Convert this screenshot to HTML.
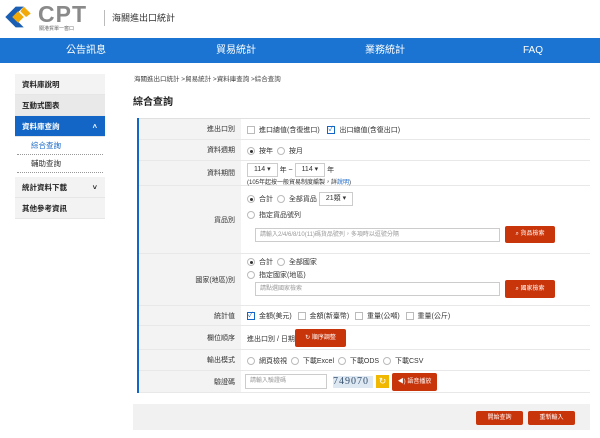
<!DOCTYPE html>
<html><head><meta charset="utf-8"><style>
*{margin:0;padding:0;box-sizing:border-box}
body{width:600px;height:438px;background:#fff;font-family:"Liberation Sans","Noto Sans CJK TC",sans-serif;font-size:7px;color:#333;position:relative;overflow:hidden}
.a{position:absolute}
.nav{top:38px;left:0;width:600px;height:25px;background:#1b74d1;color:#fff;font-size:10px}
.nav span{position:absolute;top:0;line-height:25px;height:25px}
.side{left:15px;top:74px;width:90px}
.si{height:21px;line-height:21px;padding-left:7px;font-size:7.5px;font-weight:bold;color:#222;background:#f3f3f3;border-bottom:1px solid #e6e6e6}
.sub{height:18px;line-height:18px;padding-left:14px;font-size:7.5px;background:#fff;border-bottom:1px dotted #999;margin:0 2px}
.row{position:absolute;left:137px;width:453px;border-bottom:1px solid #e8e8e8}
.lab{position:absolute;left:0;top:0;bottom:0;width:104px;background:#f3f3f3;text-align:right;padding-right:6px;display:flex;align-items:center;justify-content:flex-end}
.c{position:absolute;left:110px}
.cb{display:inline-block;width:8px;height:8px;border:1px solid #bbb;vertical-align:middle;margin-right:4px;background:#fff}
.rd{display:inline-block;width:8px;height:8px;border:1px solid #bbb;border-radius:50%;vertical-align:middle;margin-right:4px;background:#fff;position:relative}
.rd.on::after{content:"";position:absolute;left:2px;top:2px;width:3px;height:3px;border-radius:50%;background:#333}
.btn{position:absolute;background:#c9350b;color:#fff;font-size:6px;text-align:center;border-radius:2px}
.inp{position:absolute;border:1px solid #ccc;background:#fff;color:#999;font-size:6px;padding-left:4px}
.sel{display:inline-block;border:1px solid #ccc;height:14px;line-height:12px;padding:0 6px;vertical-align:middle}
</style></head><body>
<div class="a" style="left:3px;top:4px;width:30px;height:26px">
<svg width="30" height="26" viewBox="0 0 26 22"><path d="M2 11 L11 2 L18 2 L9 11 L18 20 L11 20Z" fill="#1a5fb4"/><path d="M13 6 L18 11 L13 16 L8 11Z" fill="#f2a90a"/><path d="M18 2 L24 8 L20 11 L15 6Z" fill="#f2a90a"/></svg></div>
<div class="a" style="left:38px;top:1px;font-size:23px;font-weight:bold;color:#8a8a8a;letter-spacing:1px">CPT</div>
<div class="a" style="left:39px;top:25px;font-size:5px;color:#666">關港貿單一窗口</div>
<div class="a" style="left:104px;top:10px;width:1px;height:16px;background:#bbb"></div>
<div class="a" style="left:112px;top:11px;font-size:9px;color:#333">海關進出口統計</div>
<div class="a nav"><span style="left:66px">公告訊息</span><span style="left:216px">貿易統計</span><span style="left:365px">業務統計</span><span style="left:523px">FAQ</span></div>
<div class="a side">
<div class="si">資料庫說明</div><div class="si" style="background:#e9e9e9">互動式圖表</div>
<div class="si" style="background:#1466c6;color:#fff">資料庫查詢<span style="float:right;margin-right:8px">˄</span></div>
<div class="sub" style="color:#1466c6">綜合查詢</div><div class="sub">輔助查詢</div>
<div class="si" style="margin-top:4px">統計資料下載<span style="float:right;margin-right:8px">˅</span></div><div class="si">其他參考資訊</div>
</div>
<div class="a" style="left:134px;top:73px;font-size:6.5px;color:#444">海關進出口統計 &gt;貿易統計 &gt;資料庫查詢 &gt;綜合查詢</div>
<div class="a" style="left:133px;top:93px;font-size:10px;font-weight:bold;color:#222">綜合查詢</div>
<div class="a" style="left:137px;top:118px;width:2px;height:275px;background:#1466c6;z-index:2"></div>
<div class="a" style="left:137px;top:118px;width:453px;height:1px;background:#e0e0e0"></div>
<div class="row" style="top:119px;height:21px"><div class="lab">進出口別</div><div class="c" style="top:6px"><span class="cb"></span>進口總值(含復進口) &nbsp;&nbsp;&nbsp;<span class="cb" style="border-color:#1466c6;color:#1466c6;font-size:7px;line-height:6px">✓</span>出口總值(含復出口)</div></div>
<div class="row" style="top:140px;height:21px"><div class="lab">資料週期</div><div class="c" style="top:6px"><span class="rd on"></span>按年 &nbsp;<span class="rd"></span>按月</div></div>
<div class="row" style="top:161px;height:25px"><div class="lab">資料期間</div><div class="c" style="top:2px"><span class="sel">114 ▾</span> 年 ~ <span class="sel">114 ▾</span> 年<br><span style="font-size:6px">(105年起按一般貿易制度編製，詳<span style="color:#1466c6">說明</span>)</span></div></div>
<div class="row" style="top:186px;height:68px"><div class="lab">貨品別</div><div class="c" style="top:6px"><span class="rd on"></span>合計 &nbsp;<span class="rd"></span>全部貨品 <span class="sel">21類 ▾</span><br><div style="margin-top:4px"><span class="rd"></span>指定貨品號列</div></div>
<div class="inp" style="left:118px;top:42px;width:245px;height:14px;line-height:12px">請輸入2/4/6/8/10(11)碼貨品號列，多項時以逗號分隔</div>
<div class="btn" style="left:368px;top:40px;width:50px;height:17px;line-height:17px">⌕ 貨品檢索</div></div>
<div class="row" style="top:254px;height:52px"><div class="lab">國家(地區)別</div><div class="c" style="top:3px"><span class="rd on"></span>合計 &nbsp;<span class="rd"></span>全部國家<br><div style="margin-top:3px"><span class="rd"></span>指定國家(地區)</div></div>
<div class="inp" style="left:118px;top:28px;width:245px;height:14px;line-height:12px">請點選國家檢索</div>
<div class="btn" style="left:368px;top:26px;width:50px;height:18px;line-height:18px">⌕ 國家檢索</div></div>
<div class="row" style="top:306px;height:20px"><div class="lab">統計值</div><div class="c" style="top:5px"><span class="cb" style="border-color:#1466c6;color:#1466c6;line-height:6px">✓</span>金額(美元) &nbsp;&nbsp;<span class="cb"></span>金額(新臺幣) &nbsp;&nbsp;<span class="cb"></span>重量(公噸) &nbsp;&nbsp;<span class="cb"></span>重量(公斤)</div></div>
<div class="row" style="top:326px;height:24px"><div class="lab">欄位順序</div><div class="c" style="top:8px">進出口別 / 日期</div><div class="btn" style="left:158px;top:3px;width:51px;height:18px;line-height:18px">↻ 順序調整</div></div>
<div class="row" style="top:350px;height:21px"><div class="lab">輸出模式</div><div class="c" style="top:6px"><span class="rd"></span>網頁檢視 &nbsp;<span class="rd"></span>下載Excel &nbsp;<span class="rd"></span>下載ODS &nbsp;<span class="rd"></span>下載CSV</div></div>
<div class="row" style="top:371px;height:22px"><div class="lab">驗證碼</div>
<div class="inp" style="left:108px;top:3px;width:82px;height:15px;line-height:13px">請輸入驗證碼</div>
<div class="a" style="left:196px;top:5px;width:40px;height:12px;background:#dde8f2;color:#35506e;font-family:'Liberation Serif',serif;font-size:10px;line-height:12px;letter-spacing:1px">749070</div>
<div class="a" style="left:239px;top:4px;width:13px;height:13px;background:#f0b800;color:#fff;font-size:9px;text-align:center;line-height:13px">↻</div>
<div class="btn" style="left:255px;top:2px;width:45px;height:18px;line-height:18px">◀) 語音播放</div></div>
<div class="a" style="left:133px;top:404px;width:457px;height:26px;background:#f1f1f1"></div>
<div class="btn" style="left:476px;top:411px;width:47px;height:14px;line-height:14px">開始查詢</div>
<div class="btn" style="left:528px;top:411px;width:47px;height:14px;line-height:14px">重新輸入</div>
</body></html>
